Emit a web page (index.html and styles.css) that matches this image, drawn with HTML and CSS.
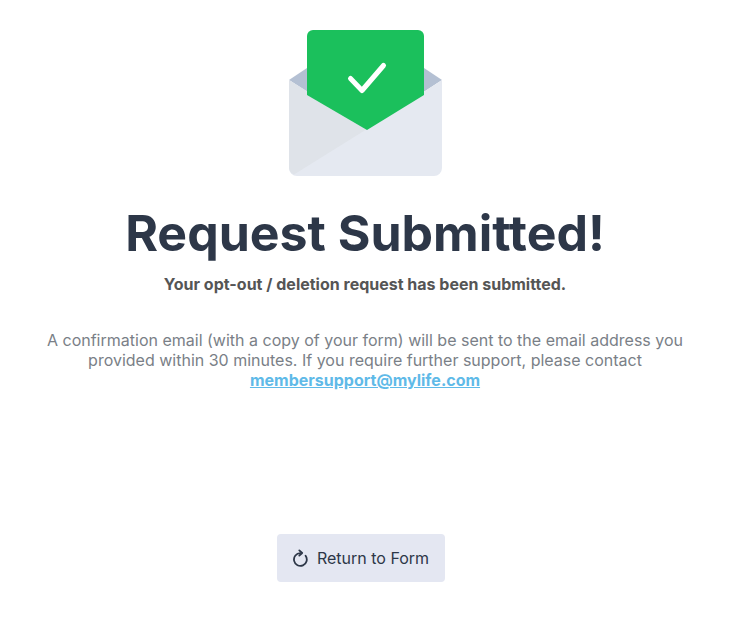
FILE: index.html
```html
<!DOCTYPE html>
<html lang="en">
<head>
<meta charset="utf-8">
<title>Request Submitted</title>
<link rel="stylesheet" href="styles.css">
</head>
<body>
<main class="page">
  <svg class="envelope" width="153" height="146" viewBox="0 0 153 146" aria-hidden="true">
    <path fill="#b4c0d3" d="M0 50 L18 38 H135 L153 50 L76 100 Z"/>
    <path fill="#e5e9f1" d="M0 50 L78 99 L153 50 V138 A8 8 0 0 1 145 146 H8 A8 8 0 0 1 0 138 Z"/>
    <path fill="#dfe3e9" d="M0 50 L78 99 L5 144.500 A8 8 0 0 1 0 138 Z"/>
    <path fill="#1bc05c" d="M18 6 A6 6 0 0 1 24 0 H129 A6 6 0 0 1 135 6 V65 L78 100 L18 65 Z"/>
    <path fill="none" stroke="#fff" stroke-width="5" stroke-linecap="round" stroke-linejoin="round" d="M61.500 48.500 L73 60.500 L94.500 35.500"/>
  </svg>
  <h1 class="title">Request Submitted!</h1>
  <p class="lead">Your opt-out / deletion request has been submitted.</p>
  <p class="body">A confirmation email (with a copy of your form) will be sent to the email address you provided within 30 minutes. If you require further support, please contact <a class="mail" href="#">membersupport@mylife.com</a></p>
  <div class="actions">
    <button class="btn" type="button">
      <svg class="btn-icon" width="16" height="18" viewBox="0 0 16 18" aria-hidden="true">
        <path fill="none" stroke="#2d3748" stroke-width="1.800" stroke-linecap="round" d="M12.600 6.800 A6.400 6.400 0 1 1 7.300 4.100"/>
        <path fill="none" stroke="#2d3748" stroke-width="1.800" stroke-linecap="round" stroke-linejoin="round" d="M6.300 1.400 L9.200 4 L6.300 6.600"/>
      </svg>
      Return to Form
    </button>
  </div>
</main>
</body>
</html>
```
FILE: styles.css
```css
* { box-sizing: border-box; }
html, body { margin: 0; background: #fff; }
body { font-family: Inter, "Liberation Sans", sans-serif; }
.page {
  width: 730px;
  height: 644px;
  padding: 30px 0 0;
  display: flex;
  flex-direction: column;
  align-items: center;
  text-align: center;
}
.envelope { display: block; flex: none; }
.title {
  margin: 27px 0 0;
  font-size: 50px;
  line-height: 60px;
  font-weight: 650;
  font-optical-sizing: none;
  color: #2d3748;
  white-space: nowrap;
}
.lead {
  margin: 9px 0 0;
  font-size: 16px;
  line-height: 24px;
  font-weight: 700;
  font-optical-sizing: none;
  color: #555555;
}
.body {
  margin: 34px 0 0;
  width: 660px;
  font-size: 16px;
  line-height: 20px;
  color: #7a7f87;
}
.mail {
  font-weight: 700;
  color: #5fbae8;
}
.actions {
  margin-top: 144px;
  width: 100%;
  display: flex;
  justify-content: center;
  padding-right: 8px;
}
.btn {
  height: 48px;
  width: 168px;
  border: 0;
  border-radius: 4px;
  background: #e4e7f2;
  color: #2d3748;
  font: 400 16px/24px Inter, "Liberation Sans", sans-serif;
  display: flex;
  align-items: center;
  justify-content: center;
  gap: 8px;
  padding: 0;
}
.btn-icon { flex: none; }
```
